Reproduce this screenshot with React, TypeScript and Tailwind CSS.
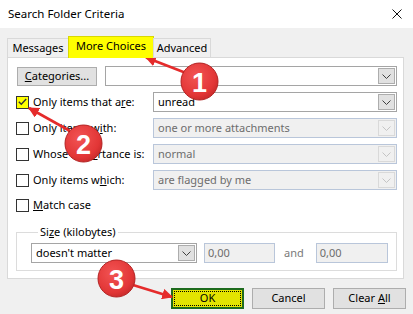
import clsx from "clsx";

const FONT = { fontFamily: '"Noto Sans", "Open Sans", sans-serif' };

function Chevron({ disabled }: { disabled?: boolean }) {
  return (
    <svg width="9" height="5" viewBox="0 0 9 5">
      <path d="M0.5 0.5 L4.5 4.5 L8.5 0.5" fill="none" stroke={disabled ? "#c4c4c4" : "#404040"} strokeWidth="1" />
    </svg>
  );
}

function Combo({ text, disabled, className }: { text?: string; disabled?: boolean; className?: string }) {
  return (
    <div
      className={clsx(
        "h-[20px] flex items-center justify-between border pl-[4px] pr-px",
        disabled ? "bg-[#f0f0f0] border-[#b9c6da] text-[#6d6d6d]" : "bg-white border-[#a5a5a5] text-black",
        className
      )}
    >
      <span className="whitespace-nowrap">{text}</span>
      <div
        className={clsx(
          "w-[17px] h-[16px] border flex items-center justify-center",
          disabled ? "border-[#d9d9d9] bg-[#f0f0f0]" : "border-[#adadad] bg-[#e1e1e1]"
        )}
      >
        <Chevron disabled={disabled} />
      </div>
    </div>
  );
}

function Checkbox({ checked }: { checked?: boolean }) {
  return (
    <div
      className={clsx(
        "w-[13px] h-[13px] border border-[#333333] flex items-center justify-center shrink-0",
        checked ? "bg-[#ffff00]" : "bg-white"
      )}
    >
      {checked && (
        <svg width="9" height="8" viewBox="0 0 9 8">
          <path d="M0.8 3.8 L3.3 6.3 L8.2 1" fill="none" stroke="#333333" strokeWidth="1.4" />
        </svg>
      )}
    </div>
  );
}

function CheckRow({ label, checked, combo, disabled }: { label: React.ReactNode; checked?: boolean; combo: string; disabled?: boolean }) {
  return (
    <div className="mt-[6px] h-[20px] flex items-center">
      <div className="w-[137px] flex items-center gap-[4px]">
        <Checkbox checked={checked} />
        <span className="whitespace-nowrap">{label}</span>
      </div>
      <Combo text={combo} disabled={disabled} className="w-[244px]" />
    </div>
  );
}

function Btn({ children, primary }: { children: React.ReactNode; primary?: boolean }) {
  return (
    <div
      className={clsx(
        "w-[73px] h-[21px] flex items-center justify-center",
        primary ? "bg-[#e3e300] border-2 border-[#1e6b1e] p-px" : "bg-[#e1e1e1] border border-[#adadad]"
      )}
    >
      {primary ? (
        <div className="w-full h-full border border-dotted border-black flex items-center justify-center">{children}</div>
      ) : (
        children
      )}
    </div>
  );
}

function Badge({ cx, cy, n }: { cx: number; cy: number; n: string }) {
  return (
    <g>
      <circle cx={cx} cy={cy} r="18.5" fill="url(#ball)" stroke="#b32222" strokeWidth="1" />
      <text
        x={cx}
        y={cy + 1}
        textAnchor="middle"
        dominantBaseline="central"
        fill="white"
        fontSize="27"
        fontWeight="bold"
        fontFamily='"Liberation Sans", Arial, sans-serif'
      >
        {n}
      </text>
    </g>
  );
}

export default function App() {
  return (
    <div className="relative w-[413px] h-[314px] overflow-hidden bg-[#f0f0f0] text-[11px] text-black" style={FONT}>
      {/* title bar */}
      <div className="h-[28px] bg-white flex items-center justify-between pl-[8px] pr-[11px]">
        <span className="text-[11.5px]">Search Folder Criteria</span>
        <svg width="10" height="10" viewBox="0 0 10 10">
          <path d="M0.5 0.5 L9.5 9.5 M9.5 0.5 L0.5 9.5" stroke="#111" strokeWidth="1" />
        </svg>
      </div>

      <div className="px-[7px] pt-[8px]">
        {/* tabs */}
        <div className="relative z-10 flex items-end h-[22px] -mb-px">
          <div className="h-[20px] w-[62px] border border-[#d9d9d9] bg-[#f0f0f0] flex items-center justify-center">Messages</div>
          <div className="h-[22px] w-[86px] -ml-px border border-b-0 border-[#d8d800] bg-[#ffff00] flex items-center justify-center pb-[2px]">
            More Choices
          </div>
          <div className="h-[20px] w-[58px] -ml-px border border-[#d9d9d9] bg-[#f0f0f0] flex items-center justify-center">Advanced</div>
        </div>

        {/* panel */}
        <div className="w-[397px] h-[222px] border border-[#d9d9d9] bg-white pl-[8px] pt-[8px]">
          <div className="h-[20px] flex items-center">
            <div className="ml-px w-[80px] h-[19px] bg-[#e1e1e1] border border-[#adadad] flex items-center justify-center">
              <span>
                <span className="underline">C</span>ategories...
              </span>
            </div>
            <Combo className="ml-[8px] w-[292px]" />
          </div>

          <CheckRow
            checked
            label={
              <>
                Only items that a<span className="underline">r</span>e:
              </>
            }
            combo="unread"
          />
          <CheckRow
            disabled
            label={
              <>
                Only items w<span className="underline">i</span>th:
              </>
            }
            combo="one or more attachments"
          />
          <CheckRow
            disabled
            label={
              <>
                Whose imp<span className="underline">o</span>rtance is:
              </>
            }
            combo="normal"
          />
          <CheckRow
            disabled
            label={
              <>
                Only items w<span className="underline">h</span>ich:
              </>
            }
            combo="are flagged by me"
          />

          <div className="mt-[5px] h-[20px] flex items-center gap-[4px]">
            <Checkbox />
            <span>
              <span className="underline">M</span>atch case
            </span>
          </div>

          <fieldset className="mt-[9px] w-[381px] border border-[#dcdcdc] pl-[14px] pb-[7px]">
            <legend className="ml-[7px] px-[2px] leading-[16px]">
              Si<span className="underline">z</span>e (kilobytes)
            </legend>
            <div className="mt-[3px] flex items-center">
              <Combo text="doesn't matter" className="w-[166px]" />
              <div className="ml-[7px] w-[71px] h-[20px] border border-[#b9c6da] bg-[#f0f0f0] text-[#6d6d6d] pl-[3px] flex items-center">
                0,00
              </div>
              <span className="ml-[9px] text-[#7a7a7a]">and</span>
              <div className="ml-[12px] w-[72px] h-[20px] border border-[#b9c6da] bg-[#f0f0f0] text-[#6d6d6d] pl-[3px] flex items-center">
                0,00
              </div>
            </div>
          </fieldset>
        </div>

        {/* buttons */}
        <div className="mt-[9px] flex gap-[8px] pl-[164px]">
          <Btn primary>OK</Btn>
          <Btn>Cancel</Btn>
          <Btn>
            <span>
              Clear <span className="underline">A</span>ll
            </span>
          </Btn>
        </div>
      </div>

      {/* annotations */}
      <svg className="absolute inset-0 pointer-events-none" width="413" height="314" viewBox="0 0 413 314">
        <defs>
          <marker id="head" viewBox="0 0 10 10" refX="9" refY="5" markerWidth="4.2" markerHeight="4.2" orient="auto">
            <path d="M0 0 L10 5 L0 10 z" fill="#e52b2b" />
          </marker>
          <radialGradient id="ball" cx="0.4" cy="0.35" r="0.7">
            <stop offset="0" stopColor="#f25454" />
            <stop offset="0.75" stopColor="#e23636" />
            <stop offset="1" stopColor="#c62a2a" />
          </radialGradient>
        </defs>
        <line x1="186" y1="73" x2="146" y2="57.5" stroke="#e52b2b" strokeWidth="2.6" markerEnd="url(#head)" />
        <line x1="70" y1="131" x2="29" y2="108" stroke="#e52b2b" strokeWidth="2.6" markerEnd="url(#head)" />
        <line x1="133" y1="285" x2="172" y2="297" stroke="#e52b2b" strokeWidth="2.6" markerEnd="url(#head)" />
        <Badge cx={199.5} cy={81.5} n="1" />
        <Badge cx={83.5} cy={143.5} n="2" />
        <Badge cx={116.5} cy={278.5} n="3" />
      </svg>
    </div>
  );
}
